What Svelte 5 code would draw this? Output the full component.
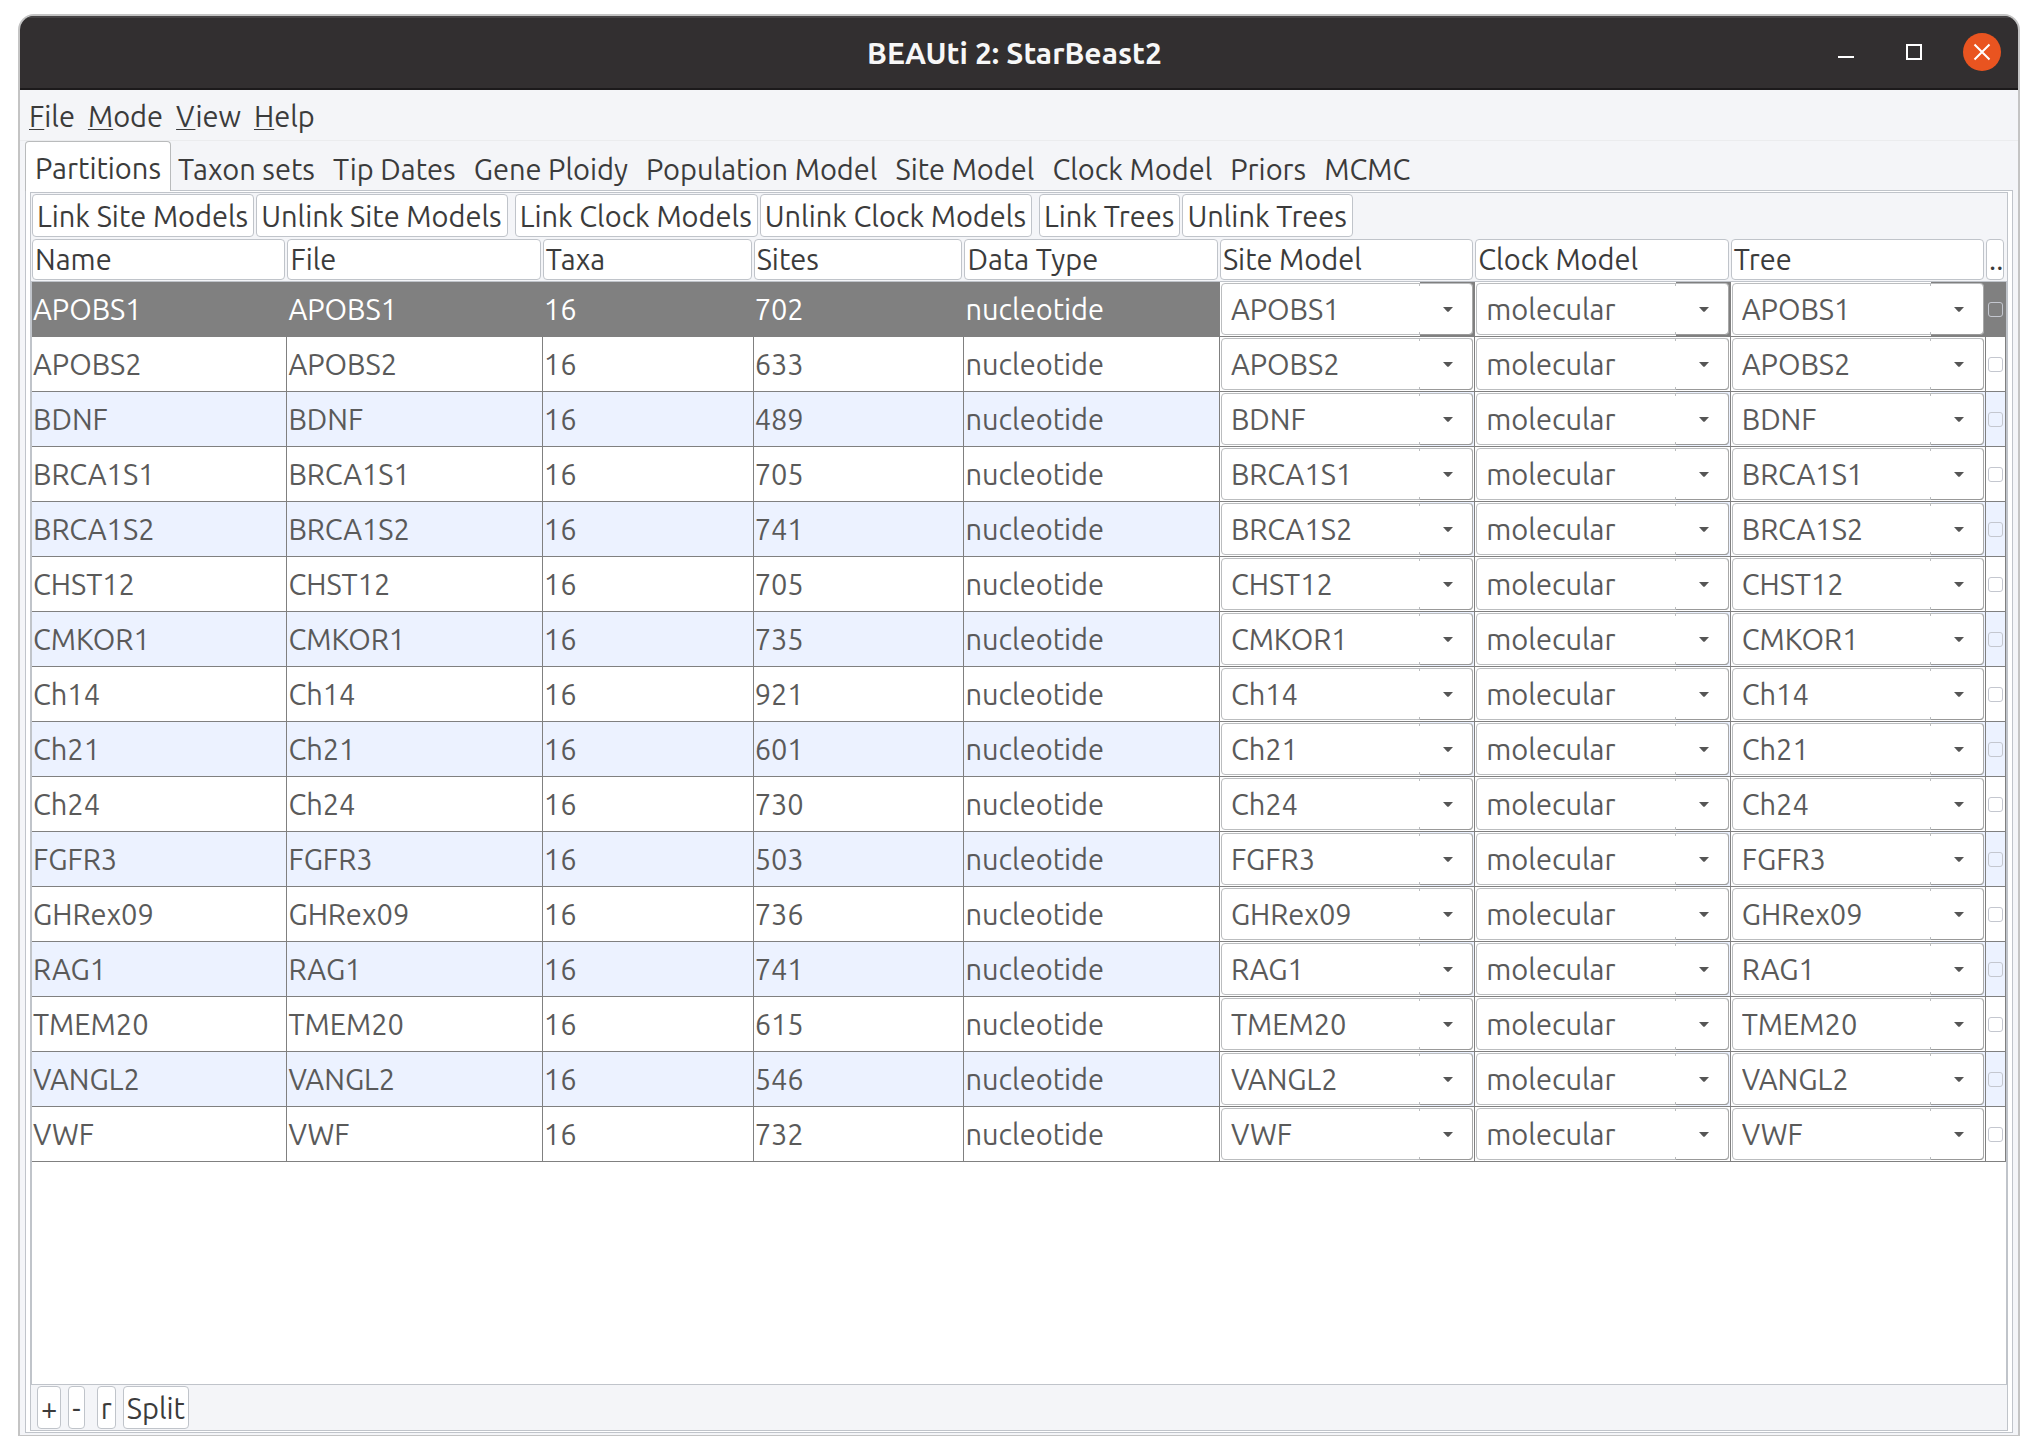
<script>
  const menus = ['File', 'Mode', 'View', 'Help'];
  const tabs = [
    'Partitions', 'Taxon sets', 'Tip Dates', 'Gene Ploidy', 'Population Model',
    'Site Model', 'Clock Model', 'Priors', 'MCMC'
  ];
  const linkGroups = [
    ['Link Site Models', 'Unlink Site Models'],
    ['Link Clock Models', 'Unlink Clock Models'],
    ['Link Trees', 'Unlink Trees']
  ];
  const columns = ['Name', 'File', 'Taxa', 'Sites', 'Data Type', 'Site Model', 'Clock Model', 'Tree', '..'];

  const partitions = [
    ['APOBS1', 702], ['APOBS2', 633], ['BDNF', 489], ['BRCA1S1', 705],
    ['BRCA1S2', 741], ['CHST12', 705], ['CMKOR1', 735], ['Ch14', 921],
    ['Ch21', 601], ['Ch24', 730], ['FGFR3', 503], ['GHRex09', 736],
    ['RAG1', 741], ['TMEM20', 615], ['VANGL2', 546], ['VWF', 732]
  ];

  let activeTab = $state('Partitions');
  let selectedRow = $state(0);
</script>

{#snippet combo(value, label)}
  <div class="combo">
    <select aria-label={label}>
      <option>{value}</option>
    </select>
    <svg class="arrow" viewBox="0 0 10 5" aria-hidden="true"><path d="M0 0H10L5.6 4.7H4.4Z" /></svg>
  </div>
{/snippet}

<div class="desktop">
  <div class="window">
    <header class="titlebar">
      <h1>BEAUti 2: StarBeast2</h1>
      <div class="controls">
        <button type="button" aria-label="Minimize">
          <svg viewBox="0 0 38 38"><path d="M11 24H27" /></svg>
        </button>
        <button type="button" aria-label="Maximize">
          <svg viewBox="0 0 38 38"><rect x="12" y="12" width="14" height="14" /></svg>
        </button>
        <button type="button" class="close" aria-label="Close">
          <svg viewBox="0 0 38 38"><path d="M11.5 11.5L26.5 26.5M26.5 11.5L11.5 26.5" /></svg>
        </button>
      </div>
    </header>

    <nav class="menubar">
      {#each menus as menu}
        <button type="button"><span class="mnemonic">{menu[0]}</span>{menu.slice(1)}</button>
      {/each}
    </nav>

    <div class="tabs" role="tablist">
      {#each tabs as tab}
        <button
          type="button"
          role="tab"
          class:active={activeTab === tab}
          aria-selected={activeTab === tab}
          onclick={() => (activeTab = tab)}>{tab}</button>
      {/each}
    </div>

    <div class="pane">
      <div class="panel">
        <div class="toolbar">
          {#each linkGroups as group}
            <div class="group">
              {#each group as action}
                <button type="button" class="btn">{action}</button>
              {/each}
            </div>
          {/each}
        </div>

        <div class="scroll">
          <div class="viewport">
            <table>
              <colgroup>
                <col class="wide" /><col class="wide" />
                <col class="narrow" /><col class="narrow" />
                <col class="wide" /><col class="wide" /><col class="wide" />
                <col /><col class="tick" />
              </colgroup>
              <thead>
                <tr>
                  {#each columns as column}
                    <th><button type="button" class="head">{column}</button></th>
                  {/each}
                </tr>
              </thead>
              <tbody>
                {#each partitions as [name, sites], i}
                  <tr class:selected={selectedRow === i} onclick={() => (selectedRow = i)}>
                    <td>{name}</td>
                    <td>{name}</td>
                    <td>16</td>
                    <td>{sites}</td>
                    <td>nucleotide</td>
                    <td class="model">{@render combo(name, `Site model of ${name}`)}</td>
                    <td class="model">{@render combo('molecular', `Clock model of ${name}`)}</td>
                    <td class="model">{@render combo(name, `Tree of ${name}`)}</td>
                    <td class="check"><input type="checkbox" aria-label={`Use ambiguities of ${name}`} /></td>
                  </tr>
                {/each}
              </tbody>
            </table>
          </div>
        </div>

        <footer class="actions">
          <button type="button" class="btn">+</button>
          <button type="button" class="btn minus">-</button>
          <button type="button" class="btn">r</button>
          <button type="button" class="btn">Split</button>
        </footer>
      </div>
    </div>
  </div>
</div>

<style>
  :global(body) {
    background: #fff;
  }

  .desktop {
    --face: #f4f5f8;
    --line: #c0c4ca;
    --grid: #808080;
    --ink: #3b3b3b;
    --cell-ink: #5a5a5a;
    box-sizing: border-box;
    display: flex;
    min-height: 100vh;
    padding: 14px 18px 19px;
    font-family: Ubuntu, "Noto Sans", "Open Sans", sans-serif;
    font-size: 29px;
    line-height: 38px;
    color: var(--ink);
  }

  button,
  select {
    margin: 0;
    padding: 0;
    border: 0;
    background: none;
    font: inherit;
    color: inherit;
    white-space: nowrap;
  }

  .window {
    flex: 1;
    min-width: 0;
    display: flex;
    flex-direction: column;
    overflow: hidden;
    border: 2px solid #c4c4c4;
    border-bottom-width: 1px;
    border-radius: 16px 16px 0 0;
    background: var(--face);
  }

  .titlebar {
    box-sizing: border-box;
    display: grid;
    grid-template-columns: 1fr auto 1fr;
    align-items: center;
    height: 74px;
    padding: 0 17px 0 8px;
    border-top: 2px solid #454344;
    border-bottom: 2px solid #1c1a1b;
    background: #322f30;
    color: #f7f7f7;
  }

  h1 {
    grid-column: 2;
    margin: 0;
    font-size: 30px;
    line-height: 38px;
    font-weight: 700;
  }

  .controls {
    display: flex;
    justify-content: flex-end;
    gap: 30px;
    padding-bottom: 2px;
  }

  .controls button {
    width: 38px;
    height: 38px;
    border-radius: 50%;
  }

  .controls svg {
    display: block;
    fill: none;
    stroke: #fff;
    stroke-width: 2;
  }

  .controls .close {
    background: #e95420;
  }

  .menubar {
    display: flex;
    gap: 13px;
    height: 49px;
    padding: 1px 0 0 9px;
    border-bottom: 1px solid #ebecee;
  }

  .mnemonic {
    text-decoration: underline;
    text-decoration-thickness: 1px;
    text-underline-offset: 2px;
  }

  .tabs {
    display: flex;
    height: 49px;
    margin: 0 5px;
  }

  .tabs button {
    padding: 6px 11px 0 7px;
  }

  .tabs .active {
    position: relative;
    box-sizing: border-box;
    height: 50px;
    padding: 3px 9px 0;
    border: 1px solid #b9bbbc;
    border-bottom: 0;
    border-radius: 4px 4px 0 0;
    background: #fff;
  }

  .pane {
    flex: 1;
    display: flex;
    margin: 0 5px 2px;
    padding: 1px 4px;
    border: 1px solid var(--line);
    background: #fff;
  }

  .panel {
    flex: 1;
    min-width: 0;
    display: flex;
    flex-direction: column;
    border: 1px solid var(--line);
    background: var(--face);
  }

  .toolbar {
    display: flex;
    gap: 7px;
    padding: 1px 1px 2px;
  }

  .group {
    display: flex;
    gap: 2px;
  }

  .btn,
  .head {
    box-sizing: border-box;
    border: 1px solid var(--line);
    border-radius: 4px;
    background: #fff;
  }

  .btn {
    height: 43px;
    padding: 0 3px;
  }

  .toolbar .btn {
    padding: 0 5px 0 4px;
  }

  .scroll {
    flex: 1;
    display: flex;
    padding: 0 1px;
    background: linear-gradient(var(--face) 42px, var(--line) 42px);
  }

  .viewport {
    flex: 1;
    min-width: 0;
    background: #fff;
  }

  table {
    width: 100%;
    table-layout: fixed;
    border-collapse: separate;
    border-spacing: 0;
  }

  .wide {
    width: 12.94%;
  }

  .narrow {
    width: 10.68%;
  }

  .tick {
    width: 20px;
  }

  th {
    height: 42px;
    padding: 0 2px 0 0;
    border-bottom: 1px solid var(--line);
    background: var(--face);
    font-weight: 400;
    vertical-align: top;
  }

  .head {
    display: block;
    width: 100%;
    height: 41px;
    padding: 0 0 1px 2px;
    text-align: left;
  }

  td {
    height: 54px;
    padding: 0 1px;
    border-right: 1px solid var(--grid);
    border-bottom: 1px solid var(--grid);
    color: var(--cell-ink);
    white-space: nowrap;
  }

  tbody tr {
    --row: #fff;
    background: var(--row);
  }

  tbody tr:nth-child(odd) {
    --row: #ecf2ff;
  }

  tbody tr.selected {
    --row: #808080;
  }

  .selected td {
    color: #fff;
  }

  td.model,
  .selected td.model {
    height: 52px;
    padding: 1px;
    background: linear-gradient(90deg, #fff calc(100% - 54px), var(--row) calc(100% - 54px));
    color: var(--cell-ink);
  }

  .combo {
    position: relative;
    height: 52px;
  }

  .combo::after {
    content: "";
    position: absolute;
    inset: 0 0 0 auto;
    box-sizing: border-box;
    width: 53px;
    border-right: 1px solid #a8a8a8;
    border-bottom: 1px solid #999;
    border-radius: 0 4px 4px 0;
    pointer-events: none;
  }

  select {
    appearance: none;
    box-sizing: border-box;
    display: block;
    width: 100%;
    height: 52px;
    padding: 0 54px 1px 9px;
    border: 1px solid #bbbdbf;
    border-radius: 4px;
    background:
      linear-gradient(#bbbdbf, #bbbdbf) calc(100% - 52px) 0 / 1px 2px no-repeat,
      linear-gradient(#bbbdbf, #bbbdbf) calc(100% - 52px) 100% / 1px 2px no-repeat,
      #fff;
  }

  .arrow {
    position: absolute;
    top: 24px;
    right: 20px;
    width: 10px;
    height: 5px;
    fill: #555;
    pointer-events: none;
  }

  td.check {
    padding: 0 2px;
  }

  .check input {
    appearance: none;
    box-sizing: border-box;
    display: block;
    width: 15px;
    height: 15px;
    margin: 0;
    border: 1px solid #c4c7cf;
    border-radius: 3px;
  }

  .actions {
    display: flex;
    gap: 7px;
    padding: 1px 6px;
    border-top: 1px solid var(--line);
  }

  .minus {
    margin-right: 5px;
  }
</style>
